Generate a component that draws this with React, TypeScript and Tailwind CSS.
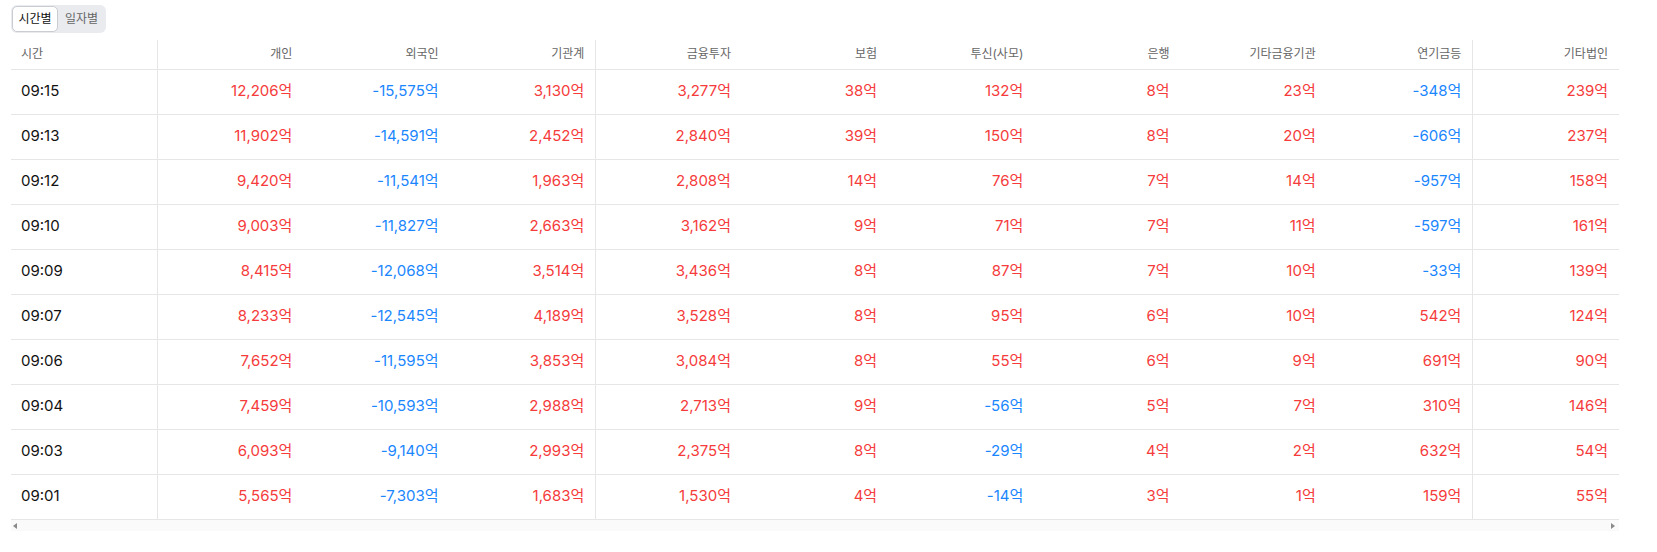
import React from "react";

const headers = ["시간", "개인", "외국인", "기관계", "금융투자", "보험", "투신(사모)", "은행", "기타금융기관", "연기금등", "기타법인"];

const rows: [string, ...number[]][] = [
  ["09:15", 12206, -15575, 3130, 3277, 38, 132, 8, 23, -348, 239],
  ["09:13", 11902, -14591, 2452, 2840, 39, 150, 8, 20, -606, 237],
  ["09:12", 9420, -11541, 1963, 2808, 14, 76, 7, 14, -957, 158],
  ["09:10", 9003, -11827, 2663, 3162, 9, 71, 7, 11, -597, 161],
  ["09:09", 8415, -12068, 3514, 3436, 8, 87, 7, 10, -33, 139],
  ["09:07", 8233, -12545, 4189, 3528, 8, 95, 6, 10, 542, 124],
  ["09:06", 7652, -11595, 3853, 3084, 8, 55, 6, 9, 691, 90],
  ["09:04", 7459, -10593, 2988, 2713, 9, -56, 5, 7, 310, 146],
  ["09:03", 6093, -9140, 2993, 2375, 8, -29, 4, 2, 632, 54],
  ["09:01", 5565, -7303, 1683, 1530, 4, -14, 3, 1, 159, 55],
];

const dividerAfter = new Set([0, 3, 9]);

function fmt(n: number) {
  return n.toLocaleString("en-US") + "억";
}

export default function App() {
  return (
    <div
      className="bg-white w-[1657px] h-[552px] pl-[11px] pt-[5px]"
      style={{ fontFamily: 'Inter, "Noto Sans CJK KR", sans-serif' }}
    >
      <div className="flex w-fit items-center rounded-[6px] bg-[#e9ebef] p-px h-[28px]">
        <button className="h-[26px] w-[46px] rounded-[5px] bg-white border border-[#c9ccd1] text-[12px] text-[#111] leading-none">
          시간별
        </button>
        <button className="h-[26px] w-[47px] text-[12px] text-[#666] leading-none">일자별</button>
      </div>
      <div className="mt-[7px] w-[1608px]">
        <table className="table-fixed border-collapse w-[1608px]">
          <colgroup>
            {headers.map((h, i) => (
              <col key={h} className={i === 10 ? "w-[146px]" : "w-[146.2px]"} />
            ))}
          </colgroup>
          <thead>
            <tr className="h-[29px] border-b border-[#e6e6e6]">
              {headers.map((h, i) => (
                <th
                  key={h}
                  className={`font-normal text-[12px] text-[#666] ${i === 0 ? "text-left pl-[10px]" : "text-right pr-[11px]"} ${dividerAfter.has(i) ? "border-r border-[#e6e6e6]" : ""}`}
                >
                  {h}
                </th>
              ))}
            </tr>
          </thead>
          <tbody>
            {rows.map((r) => (
              <tr key={r[0]} className="h-[45px] border-b border-[#e6e6e6]">
                {r.map((v, i) => {
                  const border = dividerAfter.has(i) ? "border-r border-[#e6e6e6]" : "";
                  if (i === 0)
                    return (
                      <td key={i} className={`text-left pl-[10px] text-[15px] text-[#111] ${border}`}>
                        {v as string}
                      </td>
                    );
                  const n = v as number;
                  return (
                    <td
                      key={i}
                      className={`text-right pr-[11px] text-[15px] ${n < 0 ? "text-[#1a86ff]" : "text-[#f53b3b]"} ${border}`}
                    >
                      {fmt(n)}
                    </td>
                  );
                })}
              </tr>
            ))}
          </tbody>
        </table>
        <div className="relative h-[11px] bg-[#fafafa]">
          <span className="absolute left-[2px] top-[3px] w-0 h-0 border-y-[3px] border-y-transparent border-r-[4px] border-r-[#8a8a8a]" />
          <span className="absolute right-[4px] top-[3px] w-0 h-0 border-y-[3px] border-y-transparent border-l-[4px] border-l-[#8a8a8a]" />
        </div>
      </div>
    </div>
  );
}
